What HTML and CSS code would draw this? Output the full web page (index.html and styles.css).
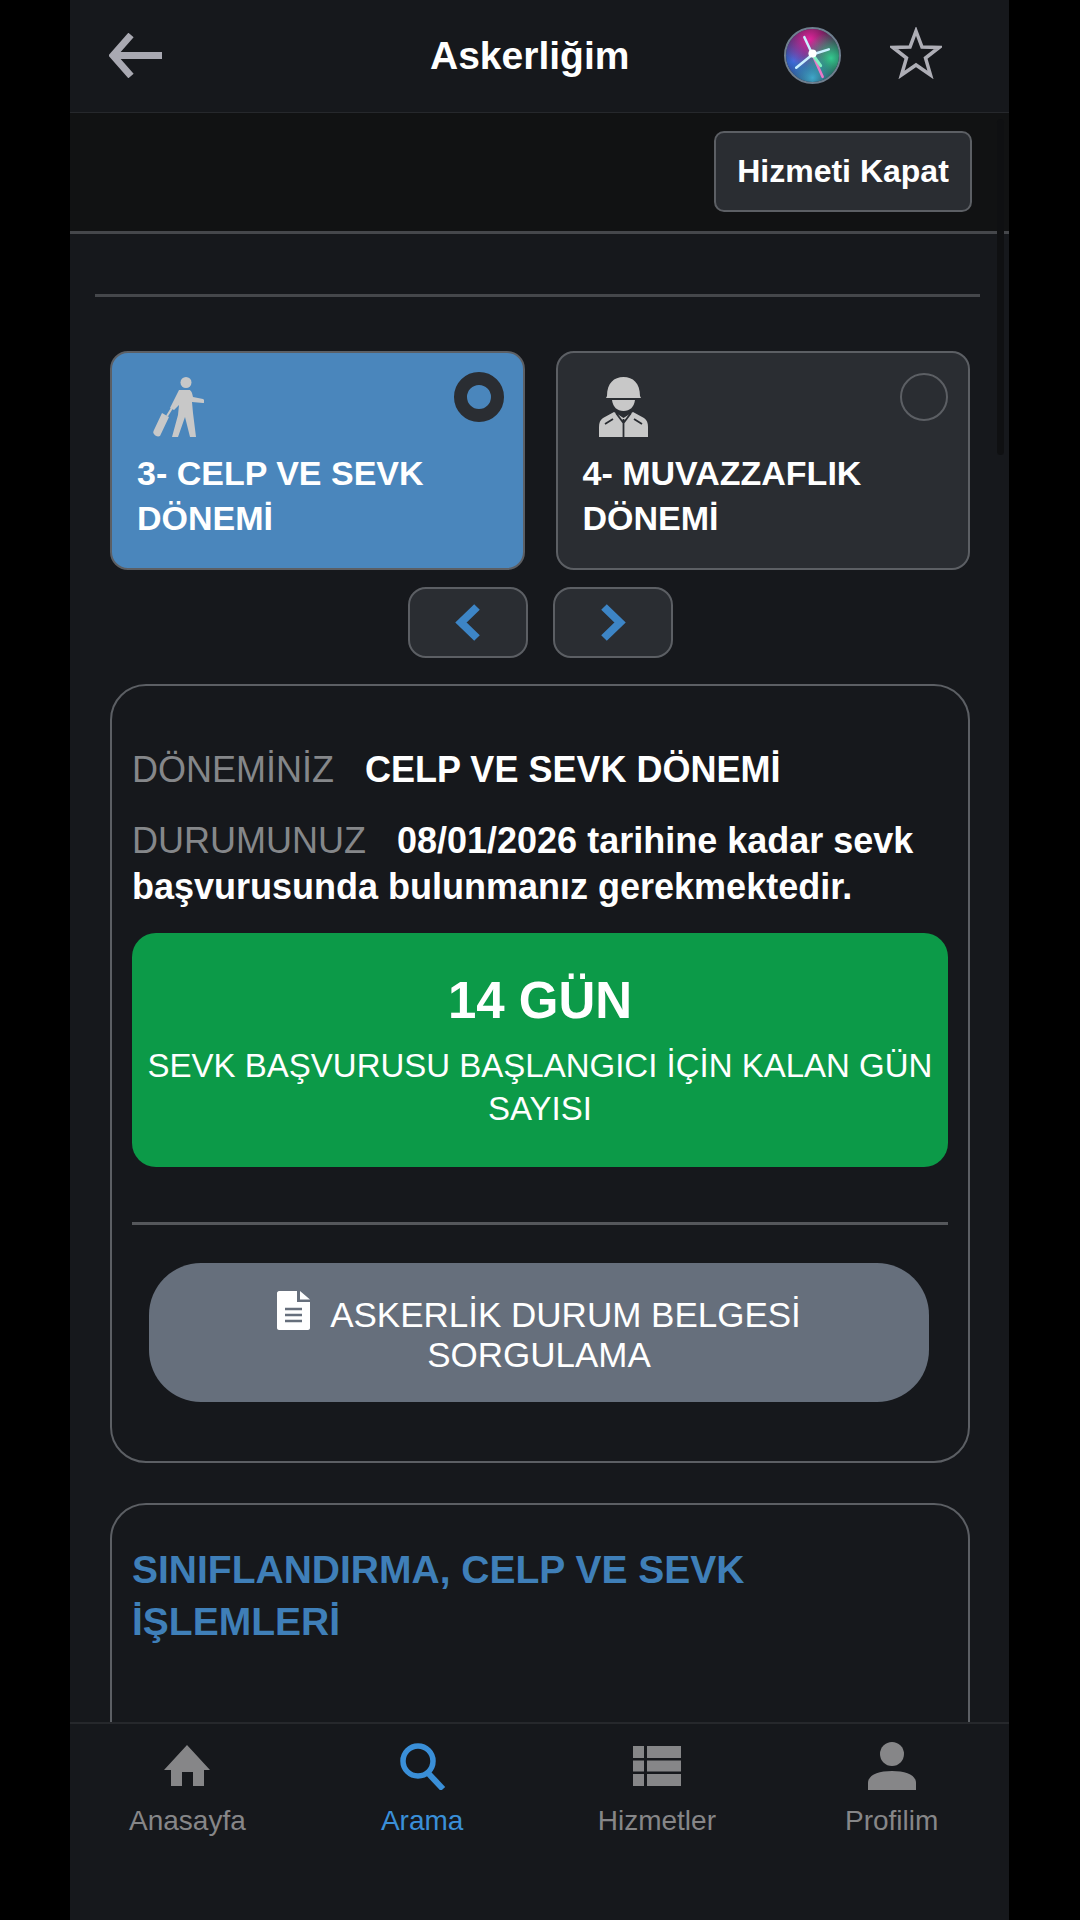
FILE: index.html
```html
<!DOCTYPE html>
<html lang="tr">
<head>
    <meta charset="UTF-8">
    <meta name="viewport" content="width=device-width, initial-scale=1.0">
    <title>Askerliğim</title>
    <link rel="stylesheet" href="styles.css">
</head>
<body>
<div class="phone">

    <!-- Header -->
    <div class="header">
        <svg class="back-icon" viewBox="0 0 53 45"><path d="M22 2 L4 22.5 L22 43 M5 22.5 H53" fill="none" stroke="#a9a9b2" stroke-width="7"/></svg>
        <h1>Askerliğim</h1>
        <svg class="siri-icon" viewBox="0 0 56 56">
            <defs>
                <radialGradient id="siri-pink" cx="0.45" cy="0.2" r="0.55"><stop offset="0" stop-color="#e0249a"/><stop offset="1" stop-color="#e0249a" stop-opacity="0"/></radialGradient>
                <radialGradient id="siri-blue" cx="0.15" cy="0.6" r="0.6"><stop offset="0" stop-color="#3a6fe0"/><stop offset="1" stop-color="#3a6fe0" stop-opacity="0"/></radialGradient>
                <radialGradient id="siri-green" cx="0.85" cy="0.55" r="0.5"><stop offset="0" stop-color="#35c98f"/><stop offset="1" stop-color="#35c98f" stop-opacity="0"/></radialGradient>
                <radialGradient id="siri-teal" cx="0.5" cy="0.92" r="0.45"><stop offset="0" stop-color="#3fa7c9"/><stop offset="1" stop-color="#3fa7c9" stop-opacity="0"/></radialGradient>
            </defs>
            <circle cx="28" cy="28" r="27" fill="#1c1c2c" stroke="#6f7f8f" stroke-width="2"/>
            <circle cx="28" cy="28" r="26" fill="url(#siri-blue)"/>
            <circle cx="28" cy="28" r="26" fill="url(#siri-pink)"/>
            <circle cx="28" cy="28" r="26" fill="url(#siri-green)"/>
            <circle cx="28" cy="28" r="26" fill="url(#siri-teal)"/>
            <path d="M28 27 L12 40 M28 27 L20 10 M28 27 L44 22" stroke="#c9f0ff" stroke-width="2.5" stroke-linecap="round"/>
            <path d="M28 27 L38 49" stroke="#e878c8" stroke-width="2.5" stroke-linecap="round"/>
            <path d="M28 27 L36 38" stroke="#7ff0c0" stroke-width="3" stroke-linecap="round"/>
            <circle cx="28" cy="26" r="4" fill="#ffffff"/>
        </svg>
        <svg class="star-icon" viewBox="0 0 52 52"><path d="M26 4 L32 20 L49 20.5 L35.5 31 L40.5 48 L26 38 L11.500 48 L16.500 31 L3 20.500 L20 20 Z" fill="none" stroke="#aeaeb6" stroke-width="3.500"/></svg>
    </div>

    <div class="main">

        <!-- Close bar -->
        <div class="close-bar">
            <button class="close-btn">Hizmeti Kapat</button>
        </div>

        <div class="top-rule"></div>

        <div class="content">

            <!-- Period tiles -->
            <div class="tiles">
                <div class="tile active">
                    <svg class="tile-icon" viewBox="0 0 51 60">
                        <circle cx="33" cy="5.500" r="5.500" fill="#c8c8c8"/>
                        <path d="M26 13 H36 C38 13 39 15 40 20 L50 22 C52 23 52 26 50 26 L39 25 L40 36 L43 60 H37 L32 40 L25 60 H19 L25 38 L26 28 L21 33 L17 31 Z" fill="#c8c8c8"/>
                        <path d="M19 31 L14 39" stroke="#c8c8c8" stroke-width="2" fill="none"/>
                        <path d="M9 36 L16 40 L7 59 C5 60 2 59 1 57 C0 56 0 55 1 53 Z" fill="#c8c8c8"/>
                    </svg>
                    <div class="tile-title">3- CELP VE SEVK DÖNEMİ</div>
                    <span class="radio selected"></span>
                </div>
                <div class="tile">
                    <svg class="tile-icon" viewBox="0 0 49 60">
                        <path d="M8 19 C8 6 15 0 24.500 0 C34 0 41 6 41 19 L42 21 H7 Z" fill="#c8c8c8"/>
                        <path d="M13 23 H36 C35 30 31 34 24.500 34 C18 34 14 30 13 23 Z" fill="#c8c8c8"/>
                        <path d="M15 35 L24.500 41 L34 35 L45 41 C48 43 49 46 49 50 V60 H0 V50 C0 46 1 43 4 41 Z" fill="#c8c8c8"/>
                        <path d="M24.500 42 V60 M17 36 L24.500 46 L32 36 M6 47 L14 42 M35 42 L43 47" stroke="#2a2d32" stroke-width="1.800" fill="none"/>
                    </svg>
                    <div class="tile-title">4- MUVAZZAFLIK DÖNEMİ</div>
                    <span class="radio"></span>
                </div>
            </div>

            <div class="pager">
                <button class="pager-btn"><svg viewBox="0 0 26 39"><path d="M22 4 L6 19.500 L22 35" fill="none" stroke="#3d85c6" stroke-width="8"/></svg></button>
                <button class="pager-btn"><svg viewBox="0 0 26 39"><path d="M4 4 L20 19.500 L4 35" fill="none" stroke="#3d85c6" stroke-width="8"/></svg></button>
            </div>

            <!-- Status card -->
            <div class="card">
                <p class="info"><span class="info-label">DÖNEMİNİZ</span><b>CELP VE SEVK DÖNEMİ</b></p>
                <p class="info second"><span class="info-label">DURUMUNUZ</span><b>08/01/2026 tarihine kadar sevk başvurusunda bulunmanız gerekmektedir.</b></p>
                <div class="countdown">
                    <div class="countdown-days">14 GÜN</div>
                    <div class="countdown-text">SEVK BAŞVURUSU BAŞLANGICI İÇİN KALAN GÜN SAYISI</div>
                </div>
                <div class="card-rule"></div>
                <button class="query-btn">
                    <svg class="doc-icon" viewBox="0 0 33 39">
                        <path d="M2 0 H20 V11 H33 V37 C33 38 32 39 31 39 H2 C1 39 0 38 0 37 V2 C0 1 1 0 2 0 Z M23 0 L33 8.500 H23 Z" fill="#ffffff"/>
                        <path d="M8 18 H25 M8 24 H25 M8 30 H25" stroke="#666f7c" stroke-width="2.500"/>
                    </svg>ASKERLİK DURUM BELGESİ SORGULAMA
                </button>
            </div>

            <!-- Next section -->
            <div class="card next">
                <h2>SINIFLANDIRMA, CELP VE SEVK İŞLEMLERİ</h2>
            </div>

        </div>
        <div class="scroll-thumb"></div>
    </div>

    <!-- Bottom tabs -->
    <div class="tabs">
        <div class="tab">
            <svg viewBox="0 0 48 48"><path d="M24 3 L47 28 H41 V44 H30 V30 H19 V44 H8 V28 H1 Z" fill="#868688"/></svg>
            <span>Anasayfa</span>
        </div>
        <div class="tab current">
            <svg viewBox="0 0 48 48"><circle cx="20" cy="19" r="15" fill="none" stroke="#3a8fd8" stroke-width="5.500"/><path d="M30 31 L45 47" stroke="#3a8fd8" stroke-width="6"/></svg>
            <span>Arama</span>
        </div>
        <div class="tab">
            <svg viewBox="0 0 48 48"><path d="M0 4 H11 V16 H0 Z M14 4 H48 V16 H14 Z M0 18.500 H11 V29.500 H0 Z M14 18.500 H48 V29.500 H14 Z M0 32 H11 V44 H0 Z M14 32 H48 V44 H14 Z" fill="#868688"/></svg>
            <span>Hizmetler</span>
        </div>
        <div class="tab">
            <svg viewBox="0 0 48 48"><ellipse cx="24" cy="12" rx="12" ry="12" fill="#868688"/><path d="M0 48 V41 C0 33 10 29 24 29 C38 29 48 33 48 41 V48 Z" fill="#868688"/></svg>
            <span>Profilim</span>
        </div>
    </div>

</div>
</body>
</html>
```

FILE: styles.css
```css
* {
    box-sizing: border-box;
}
body {
    margin: 0;
    background-color: #000;
    font-family: "Liberation Sans", Arial, sans-serif;
    color: #fff;
}
.phone {
    width: 939px;
    height: 1920px;
    margin-left: 70px;
    background-color: #16181c;
    display: flex;
    flex-direction: column;
    overflow: hidden;
}

/* header */
.header {
    height: 113px;
    flex-shrink: 0;
    display: flex;
    align-items: center;
    position: relative;
    border-bottom: 1px solid #26282c;
    padding-left: 39px;
}
.header h1 {
    margin: 0 0 0 268px;
    font-size: 39px;
    font-weight: bold;
    width: 218px;
    white-space: nowrap;
}
.back-icon {
    width: 53px;
    height: 45px;
    margin-top: -2px;
}
.siri-icon {
    width: 57px;
    height: 57px;
    margin-left: 136px;
    margin-top: -2px;
}
.star-icon {
    width: 52px;
    height: 52px;
    margin-left: 49px;
    margin-top: -6px;
}

/* main scrolling area */
.main {
    flex: 1;
    min-height: 0;
    overflow: hidden;
    position: relative;
}
.close-bar {
    height: 121px;
    background-color: #111213;
    border-bottom: 3px solid #45474b;
    display: flex;
    justify-content: flex-end;
    align-items: flex-start;
    padding: 18px 37px 0 0;
}
.close-btn {
    width: 258px;
    height: 81px;
    background-color: #2a2d32;
    border: 2px solid #5c5f64;
    border-radius: 10px;
    color: #fff;
    font-family: inherit;
    font-size: 32px;
    font-weight: bold;
}
.top-rule {
    height: 3px;
    margin: 60px 29px 0 25px;
    background-color: #45474b;
}
.content {
    padding: 54px 39px 0 40px;
}
.scroll-thumb {
    position: absolute;
    top: 6px;
    right: 5px;
    width: 7px;
    height: 336px;
    border-radius: 4px;
    background-color: #0f1012;
}

/* tiles */
.tiles {
    display: flex;
    gap: 31px;
}
.tile {
    flex: 1;
    height: 219px;
    position: relative;
    padding: 24px 20px 0 25px;
    background-color: #2a2d32;
    border: 2px solid #5c5f64;
    border-radius: 18px;
}
.tile.active {
    background-color: #4a86bc;
}
.tile-icon {
    display: block;
    height: 60px;
    margin-left: 16px;
}
.tile-title {
    margin-top: 14px;
    font-size: 34px;
    font-weight: bold;
    line-height: 45px;
}
.radio {
    position: absolute;
    top: 20px;
    right: 20px;
    width: 48px;
    height: 48px;
    border: 2px solid #5c5f64;
    border-radius: 50%;
}
.radio.selected {
    width: 50px;
    height: 50px;
    top: 19px;
    right: 19px;
    border: 13px solid #2a2d32;
}

/* prev, next */
.pager {
    display: flex;
    justify-content: center;
    gap: 25px;
    margin-top: 17px;
}
.pager-btn {
    width: 120px;
    height: 71px;
    padding: 0;
    background-color: #2a2d32;
    border: 2px solid #5c5f64;
    border-radius: 18px;
    display: flex;
    align-items: center;
    justify-content: center;
}
.pager-btn svg {
    width: 26px;
    height: 39px;
}

/* cards */
.card {
    margin-top: 26px;
    padding: 61px 20px 59px;
    border: 2px solid #5c5f64;
    border-radius: 36px;
}
.info {
    margin: 0;
    font-size: 36px;
    line-height: 46px;
}
.info.second {
    margin-top: 25px;
}
.info-label {
    color: #85878a;
    margin-right: 31px;
}
.countdown {
    margin-top: 23px;
    height: 234px;
    padding: 38px 12px 0;
    background-color: #0c9a48;
    border-radius: 24px;
    text-align: center;
}
.countdown-days {
    font-size: 51px;
    font-weight: bold;
    line-height: 60px;
}
.countdown-text {
    margin-top: 13px;
    font-size: 33px;
    line-height: 43px;
}
.card-rule {
    height: 3px;
    margin-top: 55px;
    background-color: #55575b;
}
.query-btn {
    display: block;
    width: 780px;
    height: 139px;
    margin: 38px 0 0 17px;
    padding: 0 60px;
    background-color: #666f7c;
    border: none;
    border-radius: 52px;
    color: #fff;
    font-family: inherit;
    font-size: 35px;
    line-height: 40px;
}
.doc-icon {
    width: 33px;
    height: 39px;
    margin-right: 20px;
    vertical-align: -3px;
}
.card.next {
    margin-top: 40px;
    padding: 39px 20px 200px;
}
.card.next h2 {
    margin: 0;
    color: #3f7fb8;
    font-size: 39px;
    line-height: 52px;
}

/* tabs */
.tabs {
    height: 198px;
    flex-shrink: 0;
    display: flex;
    background-color: #16181c;
    border-top: 2px solid #26282c;
    padding-top: 18px;
}
.tab {
    flex: 1;
    display: flex;
    flex-direction: column;
    align-items: center;
    color: #868688;
    font-size: 28px;
}
.tab svg {
    width: 48px;
    height: 48px;
}
.tab span {
    margin-top: 13px;
    line-height: 36px;
}
.tab.current {
    color: #3a8fd8;
}
```
